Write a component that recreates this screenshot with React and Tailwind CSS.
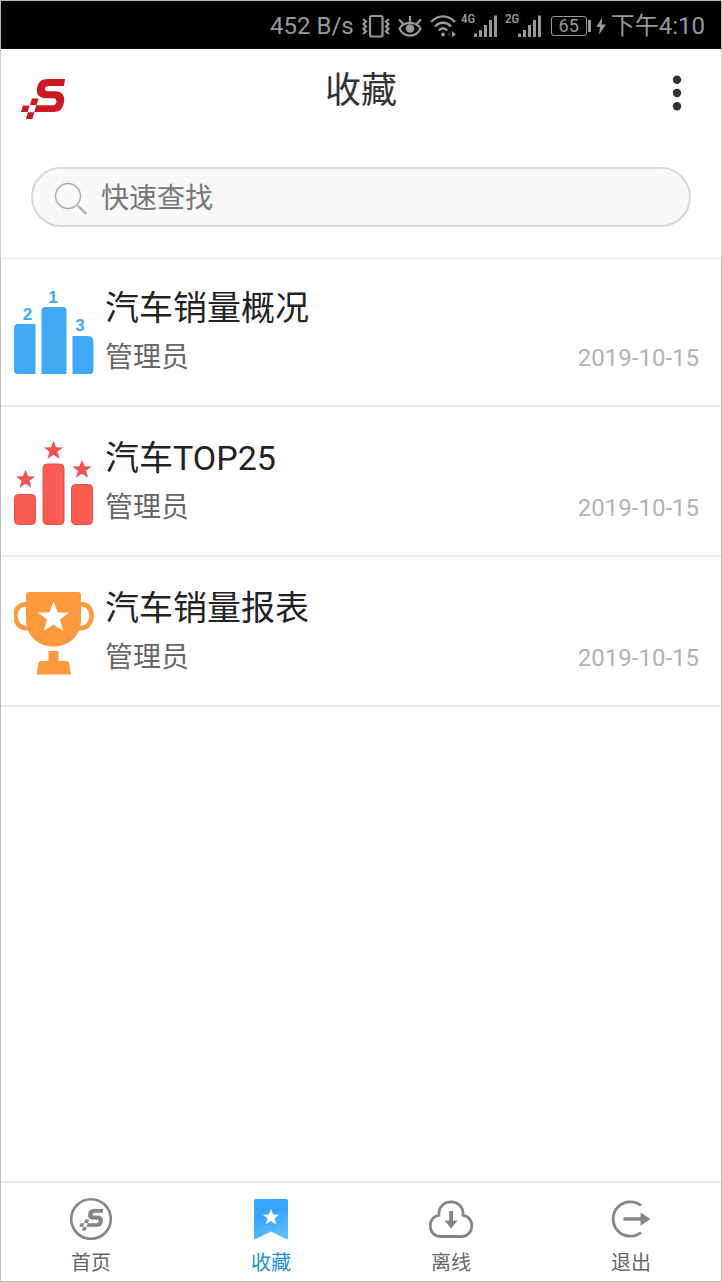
import React from "react";

const STAR = "M0 -10 L2.6 -3.2 L9.8 -3.1 L4.1 1.3 L6.1 8.4 L0 4.3 L-6.1 8.4 L-4.1 1.3 L-9.8 -3.1 L-2.6 -3.2 Z";

function BrandMark() {
  return (
    <>
      <path d="M44 0 L43 7 H28 C23 7 22.5 12.3 27 12.3 H34 C41 12.3 44 16.5 43 23 C42 30 38.5 33 32 33 H13.3 L15 26.3 H32 C36 26.3 37 19.3 32.5 19.3 H25 C18.5 19 15 15.5 16 9.5 C17 3 20.5 0 27 0 Z" />
      <path d="M10.9 19.5 H17.7 L15.5 26 H8.9 Z M1.9 26.4 H8.7 L6.5 33 H0 Z M6.9 33.3 H13.3 L11.5 40 H4.9 Z" />
    </>
  );
}

function VibrateIcon() {
  return (
    <svg className="h-6 w-7" viewBox="0 0 28 24" fill="none" stroke="currentColor" strokeWidth="2.2">
      <rect x="8" y="2" width="12.5" height="20.5" rx="1.5" />
      <path d="M1 5 L4 7.5 L1.5 10 L4 12.5 L1.5 15 L4 17.5 L1 20 M27 5 L24 7.5 L26.5 10 L24 12.5 L26.5 15 L24 17.5 L27 20" />
    </svg>
  );
}

function EyeIcon() {
  return (
    <svg className="h-6 w-6" viewBox="0 0 24 24" fill="none" stroke="currentColor" strokeWidth="2.2">
      <path d="M1.5 14.5 C6 7 18 7 22.5 14.5 C18 24 6 24 1.5 14.5 Z" />
      <circle cx="12" cy="14.5" r="4.3" fill="currentColor" stroke="none" />
      <path d="M12 8.5 V2 M5.5 10 L1 5.5 M18.5 10 L23 5.5" />
    </svg>
  );
}

function WifiStatusIcon() {
  return (
    <svg className="h-6 w-7" viewBox="0 0 28 24" fill="none" stroke="currentColor" strokeWidth="2.4">
      <path d="M1 8 C8 0.5 18 0.5 25 8 M5 12.5 C9.5 7.5 16.5 7.5 21 12.5 M8.8 16.5 C11.5 13.5 14.5 13.5 17.2 16.5" />
      <circle cx="13" cy="20.5" r="2" fill="currentColor" stroke="none" />
      <path d="M22 17 L26 20.2 L22 23.4 Z" fill="currentColor" stroke="none" />
      <path d="M20.5 17 L17.5 20.2 L20.5 23.4 Z" fill="currentColor" stroke="none" opacity="0.3" />
    </svg>
  );
}

function Signal({ label }) {
  return (
    <span className="flex items-start">
      <svg className="h-3 w-3 overflow-visible" viewBox="0 0 12 12" fill="currentColor">
        <text x="-1" y="9" fontSize="13" fontWeight="500" fontFamily="'Roboto Condensed', Roboto, sans-serif">{label}</text>
      </svg>
      <svg className="h-6 w-6" viewBox="0 0 24 24" fill="currentColor">
        <path d="M0 19.5 h3 v3.5 h-3 z M5 16 h3 v7 h-3 z M10 11 h3 v12 h-3 z M15 6 h3 v17 h-3 z M20 1.5 h3 v21.5 h-3 z" />
      </svg>
    </span>
  );
}

function StatusBar() {
  return (
    <div className="flex h-12 items-center justify-end bg-black pt-px pr-4 text-2xl text-[#999]">
      <span className="mr-2 whitespace-nowrap">452 B/s</span>
      <div className="mr-1 flex items-center gap-2">
        <VibrateIcon />
        <EyeIcon />
        <WifiStatusIcon />
      </div>
      <div className="mr-[9px] flex items-center gap-2">
        <Signal label="4G" />
        <Signal label="2G" />
      </div>
      <span className="flex items-center">
        <span className="flex h-5 w-9 items-center justify-center rounded-[3px] border border-[#999] text-[18px] leading-5">65</span>
        <span className="ml-px h-3 w-[3px] bg-[#999]" />
      </span>
      <svg className="mx-1 h-5 w-3" viewBox="0 0 12 20" fill="currentColor">
        <path d="M7 1.5 L1.5 11 H5 L4 18.5 L11 8.5 H6.8 Z" />
      </svg>
      <span className="whitespace-nowrap">下午4:10</span>
    </div>
  );
}

function SalesRankIcon() {
  return (
    <svg className="h-[90px] w-20" viewBox="0 1 80 90" fill="#3fa9f5" aria-hidden="true">
      <path d="M4 37 H21.5 V87 H4 Q0 87 0 83 V41 Q0 37 4 37 Z" />
      <path d="M31 20 H49 Q52.5 20 52.5 24 V87 H27.5 V24 Q27.5 20 31 20 Z" />
      <path d="M58.5 49 H74 Q79.5 49 79.5 55 V83 Q79.5 87 75.5 87 H58.5 Z" />
      <g fontFamily="'Liberation Sans', sans-serif" fontWeight="700" fontSize="17" textAnchor="middle">
        <text x="13.5" y="33">2</text>
        <text x="39" y="16">1</text>
        <text x="66" y="44">3</text>
      </g>
    </svg>
  );
}

function TopIcon() {
  return (
    <svg className="h-[90px] w-20" viewBox="0 1 80 90" fill="#fa5c53" stroke="#e54b48" strokeWidth="1" aria-hidden="true">
      <rect x="0.5" y="57.5" width="21" height="30" rx="4" />
      <rect x="29" y="27" width="21" height="60.5" rx="4" />
      <rect x="57.5" y="47.5" width="21" height="40" rx="4" />
      <g stroke="none" fill="#ee5252">
        <path d={STAR} transform="translate(11.5 42.5) scale(0.98)" />
        <path d={STAR} transform="translate(39.5 13.5) scale(0.98)" />
        <path d={STAR} transform="translate(68 32.5) scale(0.98)" />
      </g>
    </svg>
  );
}

function TrophyIcon() {
  return (
    <svg className="h-[90px] w-20" viewBox="0 1 80 90" fill="#fd9a3e" aria-hidden="true">
      <path d="M15 5 H64 Q67 5 67 8 V32 C67 49 55 59.5 39.5 59.5 C24 59.5 12 49 12 32 V8 Q12 5 15 5 Z" />
      <path d="M14 17.5 C-3 14 -3 44 15 41 M65 17.5 C82 14 82 44 64 41" fill="none" stroke="#fd9a3e" strokeWidth="4.5" />
      <path d={STAR} transform="translate(39.5 30.5) scale(1.6)" fill="#fff" />
      <path d="M34.5 64 H44.5 V74 H52 Q54.5 74 55 76 L57 87.5 H22.5 L24.5 76 Q25 74 27.5 74 H34.5 Z" />
    </svg>
  );
}

function HomeIcon() {
  return (
    <svg className="h-11 w-11" viewBox="0 0 44 44" aria-hidden="true">
      <circle cx="22" cy="22" r="19.8" fill="none" stroke="#858585" strokeWidth="2.6" />
      <g fill="#858585" stroke="#858585" strokeWidth="0.4" transform="translate(10.5 12) scale(0.54)">
        <BrandMark />
      </g>
    </svg>
  );
}

function BookmarkIcon() {
  return (
    <svg className="h-11 w-11" viewBox="0 0 44 44" aria-hidden="true">
      <defs>
        <linearGradient id="bookmark" x1="0" y1="0" x2="0.3" y2="1">
          <stop offset="0.5" stopColor="#38a5fd" />
          <stop offset="1" stopColor="#5bbcff" />
        </linearGradient>
      </defs>
      <path d="M7 2 H37 Q39 2 39 4 V41 Q39 43 37 42 L22 34.5 L7 42 Q5 43 5 41 V4 Q5 2 7 2 Z" fill="url(#bookmark)" />
      <path d={STAR} transform="translate(22 20.3) scale(0.75)" fill="#fff" stroke="#fff" strokeWidth="1" strokeLinejoin="round" />
    </svg>
  );
}

function OfflineIcon() {
  return (
    <svg className="h-11 w-11" viewBox="0 0 44 44" aria-hidden="true">
      <path d="M10 18.3 C8.5 0.3 35.5 0.3 34 18.3 C46.5 20 45.5 39.5 32 39.5 H12 C-1.5 39.5 -2.5 20 10 18.3 Z" fill="none" stroke="#858587" strokeWidth="2.8" strokeLinejoin="round" />
      <path d="M20.2 14 H24 V23.5 H28.7 L22.1 31.5 L15.5 23.5 H20.2 Z" fill="#858587" />
    </svg>
  );
}

function ExitIcon() {
  return (
    <svg className="h-11 w-11" viewBox="0 0 44 44" aria-hidden="true">
      <path d="M32 8.5 A17.2 17.2 0 1 0 32 35.5" fill="none" stroke="#858587" strokeWidth="2.8" />
      <path d="M14.5 20.2 H31.5 V15.5 L41.5 22 L31.5 28.7 V23.8 H14.5 Z" fill="#858587" />
    </svg>
  );
}

const REPORTS = [
  { title: "汽车销量概况", owner: "管理员", date: "2019-10-15", Icon: SalesRankIcon },
  { title: "汽车TOP25", owner: "管理员", date: "2019-10-15", Icon: TopIcon },
  { title: "汽车销量报表", owner: "管理员", date: "2019-10-15", Icon: TrophyIcon },
];

const TABS = [
  { label: "首页", Icon: HomeIcon, active: false },
  { label: "收藏", Icon: BookmarkIcon, active: true },
  { label: "离线", Icon: OfflineIcon, active: false },
  { label: "退出", Icon: ExitIcon, active: false },
];

export default function App() {
  return (
    <div className="flex min-h-screen flex-col border border-[#bbb] bg-white font-['Roboto','Noto_Sans_CJK_SC',sans-serif]">
      <StatusBar />

      <header className="px-[30px] pb-[30px] shadow-[0_2px_3px_#eeeeee]">
        <div className="-mx-[10px] flex h-[88px] items-center justify-between">
          <svg className="mt-3 h-10 w-11" viewBox="0 0 44 40" fill="#cb1822" role="img" aria-label="Smartbi">
            <BrandMark />
          </svg>
          <h1 className="-mt-1 text-4xl leading-none text-[#333]">收藏</h1>
          <button type="button" aria-label="更多" className="flex w-11 justify-start">
            <svg className="h-9 w-10" viewBox="0 0 40 36" fill="#333">
              <circle cx="20" cy="4.7" r="4.2" />
              <circle cx="20" cy="18" r="4.2" />
              <circle cx="20" cy="31.3" r="4.2" />
            </svg>
          </button>
        </div>
        <label className="mt-[30px] flex h-[60px] items-center rounded-full border-2 border-[#d8d8d8] bg-[#f8f8f8] pt-[3px] pl-5">
          <svg className="h-9 w-9" viewBox="0 0 36 36" fill="none" stroke="#aaa" aria-hidden="true">
            <circle cx="15" cy="15" r="12.5" strokeWidth="1.4" />
            <path d="M24.5 24.5 L33.5 33" strokeWidth="2.2" />
          </svg>
          <input type="text" aria-label="快速查找" placeholder="快速查找" className="ml-3 min-w-0 flex-1 bg-transparent text-[28px] outline-none placeholder:text-[#777]" />
        </label>
      </header>

      <main className="flex-1">
        <ul>
          {REPORTS.map(({ title, owner, date, Icon }) => (
            <li key={title} className="border-b-2 border-[#ebebeb]">
              <a href="#report" className="flex h-[148px] items-center gap-[11px] pt-[3px] pr-[22px] pl-[13px]">
                <Icon />
                <span className="flex min-w-0 flex-1 flex-col">
                  <span className="text-[34px] leading-[50px] text-[#222]">{title}</span>
                  <span className="flex items-center justify-between leading-[50px]">
                    <span className="text-[28px] text-[#666]">{owner}</span>
                    <span className="text-2xl leading-[50px] text-[#b2b2b2]">{date}</span>
                  </span>
                </span>
              </a>
            </li>
          ))}
        </ul>
      </main>

      <nav className="grid h-[100px] grid-cols-4 border-t-2 border-[#e8e8e8]">
        {TABS.map(({ label, Icon, active }) => (
          <a
            key={label}
            href="#tab"
            aria-current={active ? "page" : undefined}
            className={active ? "flex flex-col items-center pt-[14px] text-[#1b8ee0]" : "flex flex-col items-center pt-[14px] text-[#666]"}
          >
            <Icon />
            <span className="mt-2 text-xl leading-7">{label}</span>
          </a>
        ))}
      </nav>
    </div>
  );
}
